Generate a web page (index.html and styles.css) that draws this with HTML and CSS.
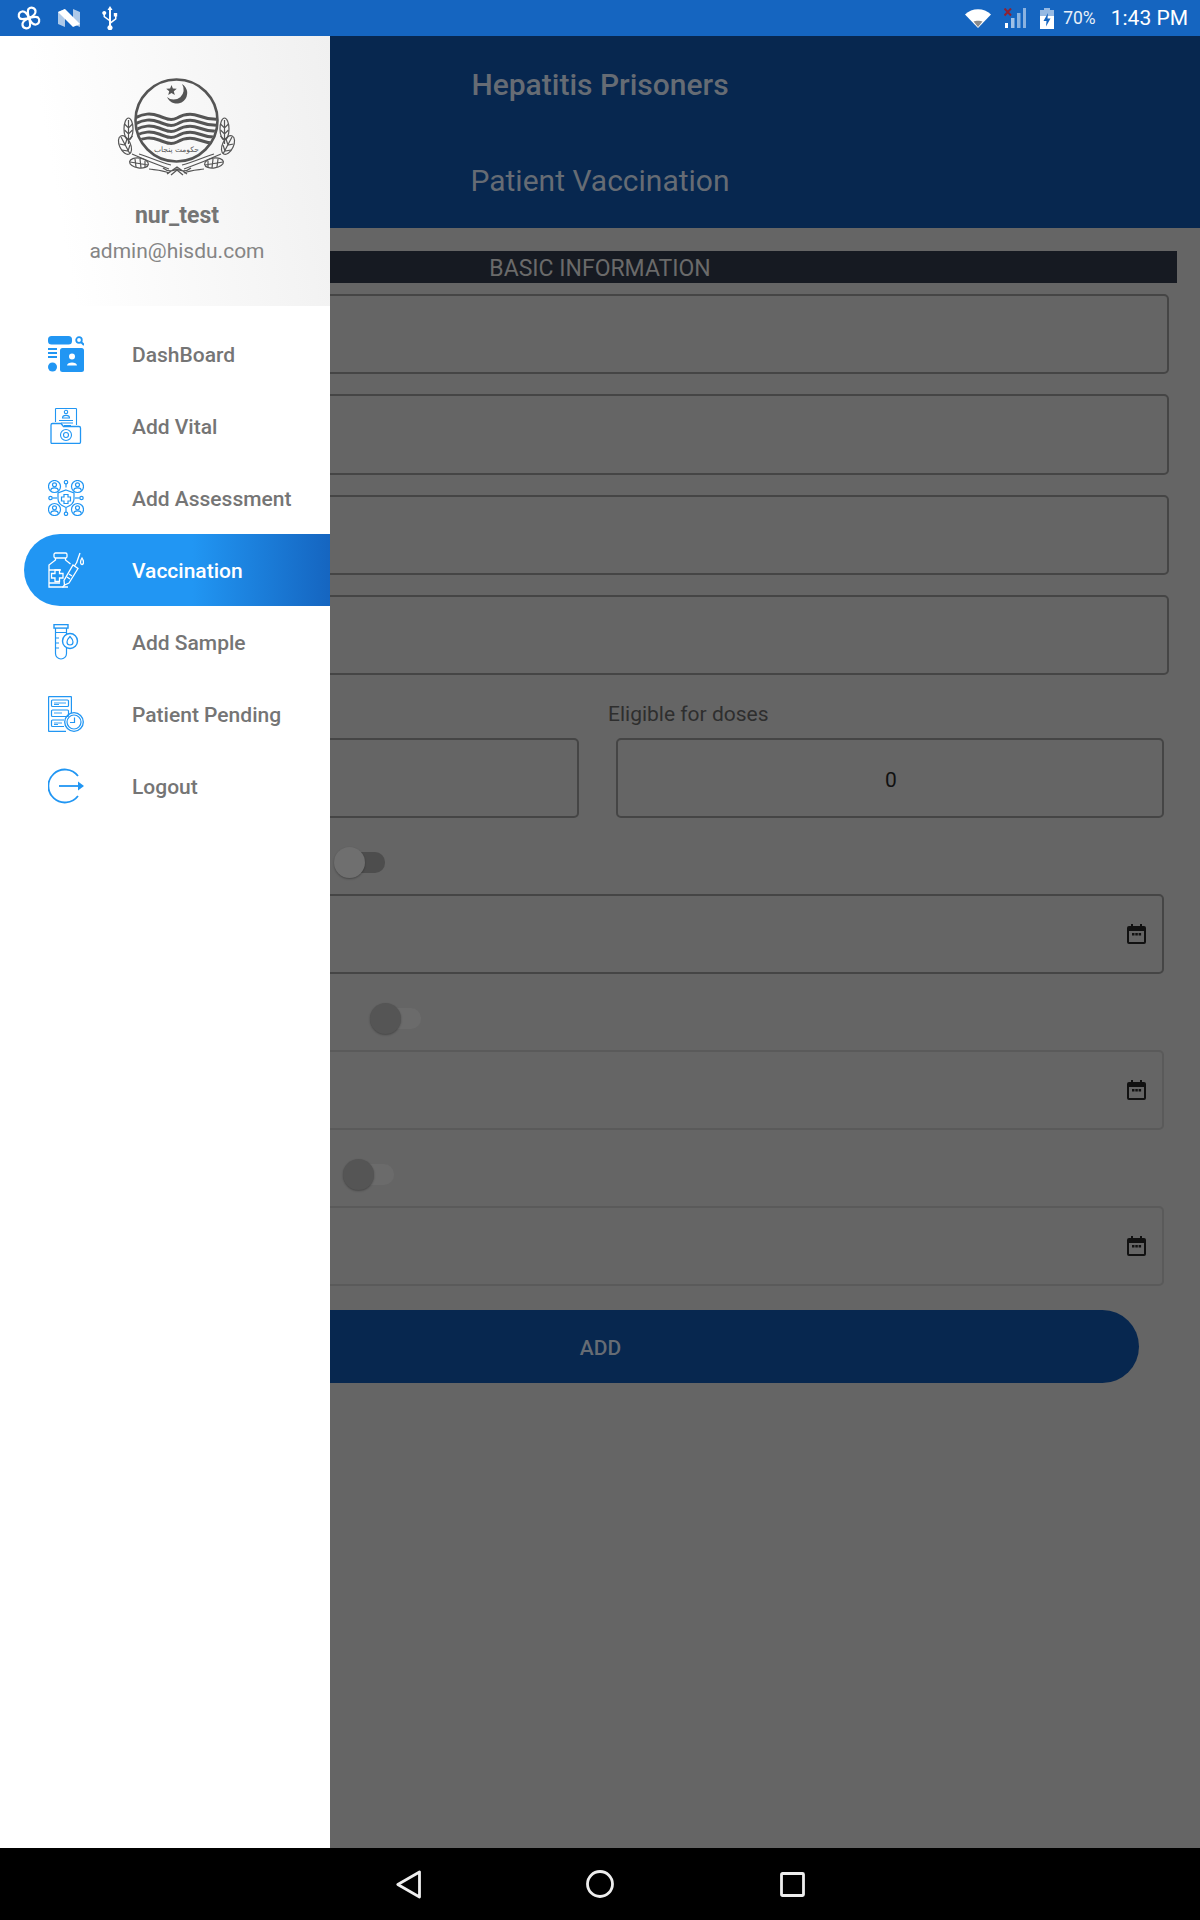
FILE: index.html
```html
<!DOCTYPE html>
<html lang="en">
<head>
    <meta charset="UTF-8">
    <meta name="viewport" content="width=device-width, initial-scale=1.0">
    <title>Patient Vaccination</title>
    <link rel="stylesheet" href="styles.css">
</head>
<body>
    <div class="status-bar">
        <div class="status-left">
            <svg class="st-pinwheel" viewBox="0 0 24 24" fill="none" stroke="#fff" stroke-width="2.2">
                <g id="petal">
                    <path d="M12 12C11 8 10 5 11.500 3C13.500 0.800 18 1.500 18.500 5C19 8.500 15.500 10.500 12 12Z"/>
                </g>
                <use href="#petal" transform="rotate(90 12 12)"/>
                <use href="#petal" transform="rotate(180 12 12)"/>
                <use href="#petal" transform="rotate(270 12 12)"/>
            </svg>
            <svg class="st-n" viewBox="0 0 22 18">
                <path d="M0 3L7 0V18L0 15Z M15 0L22 3V18L15 15Z" fill="#fff" fill-opacity="0.65"/>
                <path d="M0 3L7 0L22 15L15 18Z" fill="#fff"/>
            </svg>
            <svg class="st-usb" viewBox="0 0 16 24" fill="#fff">
                <path d="M8 0L10.500 4H9V15.500L13 12.500V10.500H11.800V7H15.200V10.500H14.500V13.300L9 17.500V19.300A2.600 2.600 0 1 1 7 19.300V15L1.500 11V8.900A2 2 0 1 1 3 8.900V10.200L7 13.200V4H5.500Z"/>
            </svg>
        </div>
        <div class="status-right">
            <svg class="st-wifi" viewBox="0 0 26 19">
                <path d="M0 5.500C7 -1.500 19 -1.500 26 5.500L13 19Z" fill="#fff"/>
                <path d="M8.500 12.500C10.500 11.500 15.500 11.500 17.500 12.500L13 18Z" fill="#8a8a8a"/>
            </svg>
            <svg class="st-signal" viewBox="0 0 22 20">
                <rect x="1" y="15" width="3" height="5" fill="#fff"/>
                <rect x="7" y="10" width="3.500" height="10" fill="#fff" fill-opacity="0.6"/>
                <rect x="13" y="5" width="3.500" height="15" fill="#fff" fill-opacity="0.5"/>
                <rect x="19" y="0" width="3" height="20" fill="#fff" fill-opacity="0.5"/>
                <path d="M0.500 0.500L7 7.500M7 0.500L0.500 7.500" stroke="#8e2233" stroke-width="2"/>
            </svg>
            <svg class="st-battery" viewBox="0 0 14 21">
                <path d="M4 0H10V2H14V8H0V2H4Z" fill="#fff" fill-opacity="0.55"/>
                <path d="M0 8H14V21H0Z" fill="#fff"/>
                <path d="M8 5L3.500 13H6.500L6 18.500L10.500 10.500H7.500Z" fill="#1565c0"/>
            </svg>
            <span class="st-percent">70%</span>
            <span class="st-time">1:43 PM</span>
        </div>
    </div>

    <div class="screen">
        <main class="page">
            <header class="app-header">
                <h1>Hepatitis Prisoners</h1>
                <h2>Patient Vaccination</h2>
            </header>

            <div class="section-bar">BASIC INFORMATION</div>

            <div class="field-stack">
                <div class="field"></div>
                <div class="field"></div>
                <div class="field"></div>
                <div class="field"></div>
            </div>

            <div class="dose-row">
                <div class="dose-col">
                    <div class="dose-label">&nbsp;</div>
                    <div class="field-box"></div>
                </div>
                <div class="dose-col">
                    <div class="dose-label">Eligible for doses</div>
                    <div class="field-box">0</div>
                </div>
            </div>

            <div class="switch switch-one"><span class="knob"></span></div>
            <div class="date-field">
                <svg class="cal" viewBox="0 0 19 20"><use href="#cal-icon"/></svg>
            </div>

            <div class="switch switch-two switch-off"><span class="knob"></span></div>
            <div class="date-field date-off">
                <svg class="cal" viewBox="0 0 19 20"><use href="#cal-icon"/></svg>
            </div>

            <div class="switch switch-three switch-off"><span class="knob"></span></div>
            <div class="date-field date-off">
                <svg class="cal" viewBox="0 0 19 20"><use href="#cal-icon"/></svg>
            </div>

            <div class="add-btn">ADD</div>
        </main>

        <aside class="drawer">
            <div class="drawer-head">
                <svg class="emblem" viewBox="0 0 120 98" fill="none" stroke="#555">
                    <defs>
                        <clipPath id="disc"><circle cx="59.500" cy="42.500" r="40"/></clipPath>
                    </defs>
                    <circle cx="59.500" cy="42.500" r="41" stroke-width="2.600"/>
                    <path d="M65 6A10.500 10.500 0 1 1 50 19A10 10 0 0 0 65 6Z" fill="#555" stroke="none"/>
                    <path d="M54.500 7L55.900 10.600L59.800 10.800L56.800 13.200L57.800 17L54.500 14.900L51.200 17L52.200 13.200L49.200 10.800L53.100 10.600Z" fill="#555" stroke="none"/>
                    <g stroke-width="3" clip-path="url(#disc)">
                        <path d="M16 41C27 35 34 35 42 38C50 41 54 43 60 40C67 36 74 35 82 38C90 41 96 42 104 41"/>
                        <path d="M16 47C27 41 34 41 42 44C50 47 54 49 60 46C67 42 74 41 82 44C90 47 96 48 104 47"/>
                        <path d="M16 53C27 47 34 47 42 50C50 53 54 55 60 52C67 48 74 47 82 50C90 53 96 54 104 53"/>
                        <path d="M16 59C27 53 34 53 42 56C50 59 54 61 60 58C67 54 74 53 82 56C90 59 96 60 104 59"/>
                        <path d="M16 65C27 59 34 59 42 62C50 65 54 67 60 64C67 60 74 59 82 62C90 65 96 66 104 65"/>
                    </g>
                    <text class="emblem-script" x="59.500" y="74" text-anchor="middle">حکومت پنجاب</text>
                    <g id="wreath" stroke-width="1.200">
                        <ellipse cx="11.500" cy="51" rx="4.500" ry="11"/>
                        <path d="M11.500 42V66M7.500 46L11.500 50L15.500 46M7.500 52L11.500 56L15.500 52M7.500 58L11.500 62L15.500 58"/>
                        <ellipse cx="8" cy="67" rx="5.500" ry="10" transform="rotate(-25 8 67)"/>
                        <path d="M4 59L13 76M2.500 66L8 67L10 61M5 72L11 73L13 67"/>
                        <ellipse cx="22" cy="85" rx="9.500" ry="5" transform="rotate(8 22 85)"/>
                        <path d="M13 84L31 87M18 81L19 89M23 81L24 90M28 83L28 89"/>
                        <path d="M15 76C26 81 38 86 52 91M22 76C32 79 42 84 54 87M32 91C40 92 46 92 52 95"/>
                    </g>
                    <use href="#wreath" transform="translate(119 0) scale(-1 1)"/>
                    <path d="M50 96L60 89L70 96M54 97L60 92L66 97M46 90C51 94 55 94 60 91C65 94 69 94 74 90" stroke-width="1.300"/>
                </svg>
                <div class="user-name">nur_test</div>
                <div class="user-mail">admin@hisdu.com</div>
            </div>

            <nav class="menu">
                <div class="menu-item">
                    <svg class="menu-icon" viewBox="0 0 36 36" fill="#2196f3">
                        <rect x="0" y="0" width="24" height="8.500" rx="3.500"/>
                        <circle cx="31" cy="4" r="2.800" fill="none" stroke="#2196f3" stroke-width="1.800"/>
                        <path d="M33 6L36 9" stroke="#2196f3" stroke-width="2"/>
                        <rect x="0" y="12" width="9" height="2"/>
                        <rect x="0" y="16" width="9" height="2"/>
                        <rect x="0" y="20" width="9" height="2"/>
                        <circle cx="4.500" cy="31" r="4.500"/>
                        <rect x="12" y="12" width="24" height="24" rx="2.500"/>
                        <circle cx="24" cy="20.500" r="3" fill="#fff"/>
                        <path d="M19 29.500C19 25.500 29 25.500 29 29.500Z" fill="#fff"/>
                    </svg>
                    <span>DashBoard</span>
                </div>
                <div class="menu-item">
                    <svg class="menu-icon" viewBox="0 0 36 36" fill="none" stroke="#2196f3" stroke-width="1.100">
                        <path d="M7.500 14V1A1 1 0 0 1 8.500 0.500H27.500A1 1 0 0 1 28.500 1V17"/>
                        <circle cx="18" cy="4" r="1.700"/>
                        <path d="M14.500 10C14.500 6.500 21.500 6.500 21.500 10Z"/>
                        <path d="M11 12.500H25M13 15H25M16 17.500H23"/>
                        <path d="M3.500 35.500A1.300 1.300 0 0 1 3 34.500V17A1.500 1.500 0 0 1 4.500 15.500H13L15.500 18.500H31A1.500 1.500 0 0 1 32.500 20V34A1.500 1.500 0 0 1 31 35.500Z" stroke-width="1.300"/>
                        <circle cx="18" cy="27" r="5.500"/>
                        <circle cx="18" cy="27" r="2.500"/>
                    </svg>
                    <span>Add Vital</span>
                </div>
                <div class="menu-item">
                    <svg class="menu-icon" viewBox="0 0 36 36" fill="none" stroke="#2196f3" stroke-width="1.200">
                        <g id="user-disc">
                            <circle cx="6.500" cy="6.500" r="6"/>
                            <circle cx="6.500" cy="4.800" r="2"/>
                            <path d="M2.800 10.600C2.800 7 10.200 7 10.200 10.600"/>
                        </g>
                        <use href="#user-disc" x="23"/>
                        <use href="#user-disc" y="23"/>
                        <use href="#user-disc" x="23" y="23"/>
                        <path d="M18 10L26 13V19C26 23 22 26 18 27.500C14 26 10 23 10 19V13Z"/>
                        <path d="M16 14.500H20V17H22.500V21H20V23.500H16V21H13.500V17H16Z"/>
                        <circle cx="18" cy="2.200" r="1.700"/>
                        <path d="M18 4V7.500"/>
                        <circle cx="18" cy="33.800" r="1.700"/>
                        <path d="M18 28V32"/>
                        <circle cx="2.500" cy="18" r="1.700"/>
                        <path d="M4.500 18H9"/>
                        <circle cx="33.500" cy="18" r="1.700"/>
                        <path d="M27 18H31.500"/>
                    </svg>
                    <span>Add Assessment</span>
                </div>
                <div class="menu-item active">
                    <svg class="menu-icon" viewBox="0 0 36 36" fill="none" stroke="#fff" stroke-width="1.300">
                        <rect x="6" y="1" width="13" height="5" rx="1.500"/>
                        <path d="M7.500 6V8L1 13V35H20M17.500 6V8L22.500 12"/>
                        <path d="M1 18H13M1 31H12"/>
                        <path d="M7 18H11.500V21.500H15V26H11.500V29.500H7V26H3.500V21.500H7Z"/>
                        <path d="M25 13L30 16.500L21 31L16.500 33L16 28.500Z"/>
                        <path d="M19 25L22 27M21 22L24 24M16.500 33L14.500 35.500M29 10L26.500 14M32 1L28.500 11"/>
                        <path d="M34 6C36 9 36 12 34 12.500C32 12 32 9 34 6Z"/>
                    </svg>
                    <span>Vaccination</span>
                </div>
                <div class="menu-item">
                    <svg class="menu-icon" viewBox="0 0 36 36" fill="none" stroke="#2196f3" stroke-width="1.200">
                        <rect x="6" y="0.600" width="14" height="3.500" stroke-width="1.400"/>
                        <path d="M7.500 4V29.500A5.500 5.500 0 0 0 18.500 29.500V23M18.500 4V11"/>
                        <path d="M7.500 8.500H18.500M7.500 14H11M7.500 19H11M7.500 24H11"/>
                        <circle cx="22" cy="17" r="7.500" stroke-width="1.400"/>
                        <path d="M22 12.500C24.500 15 25 17 25 18A3 3 0 0 1 19 18C19 17 19.500 15 22 12.500Z"/>
                    </svg>
                    <span>Add Sample</span>
                </div>
                <div class="menu-item">
                    <svg class="menu-icon" viewBox="0 0 36 36" fill="none" stroke="#2196f3" stroke-width="1.200">
                        <path d="M18 35.400H1A0.600 0.600 0 0 1 0.600 35V1A0.600 0.600 0 0 1 1 0.600H23A0.600 0.600 0 0 1 23.400 1V17"/>
                        <rect x="3.500" y="4" width="17" height="6.500" rx="1"/>
                        <path d="M6 7H18M6 8.500H11" stroke-width="0.900"/>
                        <rect x="3.500" y="14" width="17" height="6.500" rx="1"/>
                        <path d="M6 17H14" stroke-width="0.900"/>
                        <path d="M16 30.500H4.500A1 1 0 0 1 3.500 29.500V25A1 1 0 0 1 4.500 24H16" />
                        <path d="M6 27H14M6 28.500H10" stroke-width="0.900"/>
                        <circle cx="26" cy="26" r="9.300" stroke-width="1.300"/>
                        <circle cx="26" cy="26" r="7"/>
                        <path d="M26.500 21.500V26.500H22"/>
                    </svg>
                    <span>Patient Pending</span>
                </div>
                <div class="menu-item">
                    <svg class="menu-icon" viewBox="0 0 36 36" fill="none" stroke="#2196f3" stroke-width="1.800">
                        <path d="M30 8A16.500 16.500 0 1 0 30 28"/>
                        <path d="M11 18H31"/>
                        <path d="M30 13.500L36 18L30 22.500Z" fill="#2196f3" stroke="none"/>
                    </svg>
                    <span>Logout</span>
                </div>
            </nav>
        </aside>
    </div>

    <div class="nav-bar">
        <svg class="nav-back" viewBox="0 0 26 29" fill="none" stroke="#eee" stroke-width="2.800" stroke-linejoin="round">
            <path d="M23.500 2V27L1.800 14.500Z"/>
        </svg>
        <svg class="nav-home" viewBox="0 0 28 28" fill="none" stroke="#eee" stroke-width="2.800">
            <circle cx="14" cy="14" r="12.500"/>
        </svg>
        <svg class="nav-recent" viewBox="0 0 25 25" fill="none" stroke="#eee" stroke-width="2.800" stroke-linejoin="round">
            <rect x="1.500" y="1.500" width="22" height="22" rx="1"/>
        </svg>
    </div>

    <svg class="icon-defs" width="0" height="0">
        <symbol id="cal-icon" viewBox="0 0 19 20">
            <path d="M4 0H6V2H13V0H15V2H17A2 2 0 0 1 19 4V18A2 2 0 0 1 17 20H2A2 2 0 0 1 0 18V4A2 2 0 0 1 2 2H4ZM2 7V18H17V7ZM5 9H7.500V11.500H5ZM8.300 9H10.800V11.500H8.300ZM11.600 9H14.100V11.500H11.600Z" fill="#111" fill-rule="evenodd"/>
        </symbol>
    </svg>
</body>
</html>
```

FILE: styles.css
```css
body {
    font-family: Roboto, "Liberation Sans", sans-serif;
    margin: 0;
    padding: 0;
    width: 1200px;
    height: 1920px;
    display: flex;
    flex-direction: column;
    overflow: hidden;
    background: #656565;
}

/* status bar */
.status-bar {
    height: 36px;
    flex: none;
    background: #1565c0;
    color: white;
    display: flex;
    justify-content: space-between;
    align-items: center;
}
.status-left,
.status-right {
    display: flex;
    align-items: center;
}
.status-left {
    padding-left: 17px;
}
.status-right {
    padding-right: 12px;
}
.st-pinwheel {
    width: 24px;
    height: 24px;
}
.st-n {
    width: 22px;
    height: 18px;
    margin-left: 17px;
}
.st-usb {
    width: 16px;
    height: 24px;
    margin-left: 22px;
}
.st-wifi {
    width: 26px;
    height: 19px;
}
.st-signal {
    width: 22px;
    height: 20px;
    margin-left: 13px;
}
.st-battery {
    width: 14px;
    height: 21px;
    margin-left: 14px;
}
.st-percent {
    font-size: 17.500px;
    margin-left: 9px;
    opacity: 0.9;
}
.st-time {
    font-size: 21px;
    margin-left: 15px;
}

/* page behind the drawer */
.screen {
    position: relative;
    flex: 1;
}
.app-header {
    height: 192px;
    background: #07274f;
    color: #666c74;
    text-align: center;
}
.app-header h1,
.app-header h2 {
    margin: 0;
    font-size: 30px;
    height: 96px;
    line-height: 98px;
}
.app-header h1 {
    font-weight: 500;
}
.app-header h2 {
    font-weight: 400;
}
.section-bar {
    margin: 23px 23px 0;
    height: 32px;
    line-height: 35px;
    background: #161a22;
    color: #6a6a6a;
    text-align: center;
    font-size: 23px;
}
.field-stack {
    margin: 11px 31px 0;
    display: flex;
    flex-direction: column;
    gap: 20px;
}
.field {
    height: 76.300px;
    border: 2px solid #454545;
    border-radius: 5px;
}
.dose-row {
    margin: 0 36px 0 37px;
    display: grid;
    grid-template-columns: 542px 548px;
    gap: 37px;
}
.dose-label {
    height: 63px;
    line-height: 78px;
    margin-left: -8px;
    font-size: 21px;
    color: #2e2e2e;
}
.field-box {
    height: 80px;
    box-sizing: border-box;
    padding: 3px 0 0 2px;
    border: 2px solid #454545;
    border-radius: 5px;
    display: flex;
    align-items: center;
    justify-content: center;
    font-size: 21px;
    color: #111;
}
.switch {
    position: relative;
    width: 40px;
    height: 21px;
    margin-top: 34px;
    margin-bottom: 21px;
    border-radius: 10px;
    background: #4d4d4d;
}
.knob {
    position: absolute;
    left: -11px;
    top: -5px;
    width: 31px;
    height: 31px;
    border-radius: 50%;
    background: #6f6f6f;
    box-shadow: 0 1px 2px rgba(0, 0, 0, 0.3);
}
.switch-off {
    background: #6b6b6b;
}
.switch-off .knob {
    background: #555;
}
.switch-one {
    margin-left: 345px;
}
.switch-two {
    margin-left: 381px;
}
.switch-three {
    margin-left: 354px;
}
.date-field {
    margin: 0 36px 0 37px;
    height: 76px;
    border: 2px solid #454545;
    border-radius: 5px;
    display: flex;
    align-items: center;
    justify-content: flex-end;
    padding-right: 16px;
}
.date-off {
    border-color: #5a5a5a;
}
.cal {
    width: 19px;
    height: 20px;
}
.icon-defs {
    position: absolute;
}
.add-btn {
    margin: 24px 61px 0 62px;
    height: 73px;
    box-sizing: border-box;
    padding-top: 2px;
    border-radius: 37px;
    background: #07274f;
    color: #666c74;
    display: flex;
    align-items: center;
    justify-content: center;
    font-size: 21px;
    font-weight: 500;
}

/* drawer */
.drawer {
    position: absolute;
    top: 0;
    bottom: 0;
    left: 0;
    width: 330px;
    background: white;
}
.drawer-head {
    height: 270px;
    background: linear-gradient(80deg, #fff 20%, #f0f0f0 100%);
    display: flex;
    flex-direction: column;
    align-items: center;
    box-sizing: border-box;
    padding-top: 42px;
    padding-left: 24px;
}
.emblem {
    width: 120px;
    height: 98px;
    display: block;
}
.emblem-script {
    font-family: "DejaVu Sans", sans-serif;
    font-size: 7.500px;
    fill: #555;
    stroke: none;
}
.user-name {
    margin-top: 25px;
    font-size: 23px;
    line-height: 30px;
    font-weight: 700;
    color: #757575;
}
.user-mail {
    margin-top: 6px;
    font-size: 21px;
    line-height: 28px;
    color: #858585;
}
.menu {
    padding-top: 12px;
}
.menu-item {
    height: 72px;
    display: flex;
    align-items: center;
    padding-left: 48px;
    font-size: 21px;
    font-weight: 500;
    color: #757575;
}
.menu-item span {
    margin-left: 48px;
    padding-top: 2px;
}
.menu-icon {
    width: 36px;
    height: 36px;
    flex: none;
}
.menu-item.active {
    margin-left: 24px;
    padding-left: 24px;
    border-radius: 36px 0 0 36px;
    background: linear-gradient(to right, #2196f3 55%, #1565c0 100%);
    color: white;
}

/* nav bar */
.nav-bar {
    height: 72px;
    flex: none;
    background: black;
    display: flex;
    align-items: center;
    padding-left: 396px;
}
.nav-back {
    width: 26px;
    height: 29px;
}
.nav-home {
    width: 28px;
    height: 28px;
    margin-left: 164px;
}
.nav-recent {
    width: 25px;
    height: 25px;
    margin-left: 166px;
}
```
